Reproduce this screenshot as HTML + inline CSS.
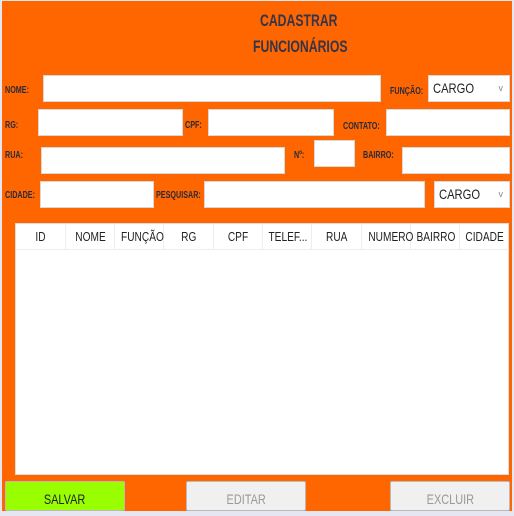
<!DOCTYPE html>
<html><head><meta charset="utf-8"><style>
*{margin:0;padding:0;box-sizing:border-box}
body{width:514px;height:506px;overflow:hidden;background:#e6e6f2;font-family:"Liberation Sans",sans-serif;position:relative}
#bg{position:absolute;left:2px;top:1px;width:510px;height:510px;background:#ff6600}
.t{position:absolute;font-weight:bold;color:#34344a;font-size:17px;white-space:nowrap;transform:scaleX(.72);transform-origin:left top}
.l{position:absolute;font-weight:bold;color:#2a2a3a;font-size:10px;white-space:nowrap;transform:scaleX(.72);transform-origin:left top}
.i{position:absolute;background:#fff;border:1px solid #d8d8d8}
.c{position:absolute;background:#fff;border:1px solid #d8d8d8;font-size:14px;color:#222;padding-left:4px;line-height:24px}
.c b{font-weight:normal;display:inline-block;transform:scaleX(.8);transform-origin:left}
.c span{position:absolute;right:6px;top:0;font-size:9px;color:#888}
#tbl{position:absolute;left:15px;top:223px;width:494px;height:252px;background:#fff;border:1px solid #ddd}
.h{position:absolute;top:0;height:26px;line-height:26px;text-align:center;font-size:13px;color:#222;border-right:1px solid #eee;border-bottom:1px solid #eee;white-space:nowrap}
.h span,.b span{display:inline-block;transform:scaleX(.78)}
.b{position:absolute;top:481px;height:30px;border:1px solid #bbb;border-radius:2px;text-align:center;font-size:14px;line-height:34px}
</style></head><body>
<div id="bg"></div>
<div class="t" style="left:260px;top:11px">CADASTRAR</div>
<div class="t" style="left:253px;top:37px">FUNCIONÁRIOS</div>

<div class="l" style="left:5px;top:85px">NOME:</div>
<div class="i" style="left:43px;top:75px;width:338px;height:27px"></div>
<div class="l" style="left:390px;top:86px">FUNÇÃO:</div>
<div class="c" style="left:428px;top:75px;width:82px;height:27px"><b>CARGO</b><span>v</span></div>

<div class="l" style="left:5px;top:120px">RG:</div>
<div class="i" style="left:38px;top:109px;width:145px;height:27px"></div>
<div class="l" style="left:185px;top:120px">CPF:</div>
<div class="i" style="left:208px;top:109px;width:126px;height:27px"></div>
<div class="l" style="left:343px;top:121px">CONTATO:</div>
<div class="i" style="left:386px;top:109px;width:124px;height:27px"></div>

<div class="l" style="left:5px;top:150px">RUA:</div>
<div class="i" style="left:41px;top:147px;width:244px;height:27px"></div>
<div class="l" style="left:294px;top:150px">Nº:</div>
<div class="i" style="left:314px;top:140px;width:41px;height:27px"></div>
<div class="l" style="left:363px;top:150px">BAIRRO:</div>
<div class="i" style="left:402px;top:147px;width:108px;height:27px"></div>

<div class="l" style="left:5px;top:190px">CIDADE:</div>
<div class="i" style="left:40px;top:181px;width:114px;height:27px"></div>
<div class="l" style="left:156px;top:190px">PESQUISAR:</div>
<div class="i" style="left:204px;top:181px;width:221px;height:27px"></div>
<div class="c" style="left:434px;top:181px;width:76px;height:27px"><b>CARGO</b><span>v</span></div>

<div id="tbl">
<div class="h" style="left:0;width:50px"><span>ID</span></div>
<div class="h" style="left:50px;width:49px"><span>NOME</span></div>
<div class="h" style="left:99px;width:49px"><span>FUNÇÃO</span></div>
<div class="h" style="left:148px;width:50px"><span>RG</span></div>
<div class="h" style="left:198px;width:49px"><span>CPF</span></div>
<div class="h" style="left:247px;width:49px"><span>TELEF...</span></div>
<div class="h" style="left:296px;width:50px"><span>RUA</span></div>
<div class="h" style="left:346px;width:49px"><span>NUMERO</span></div>
<div class="h" style="left:395px;width:49px"><span>BAIRRO</span></div>
<div class="h" style="left:444px;width:49px;border-right:none"><span>CIDADE</span></div>
</div>

<div class="b" style="left:5px;width:120px;background:#99ff00;color:#222"><span>SALVAR</span></div>
<div class="b" style="left:186px;width:120px;background:#f0f0f0;color:#999"><span>EDITAR</span></div>
<div class="b" style="left:390px;width:120px;background:#f0f0f0;color:#999"><span>EXCLUIR</span></div>
</body></html>
